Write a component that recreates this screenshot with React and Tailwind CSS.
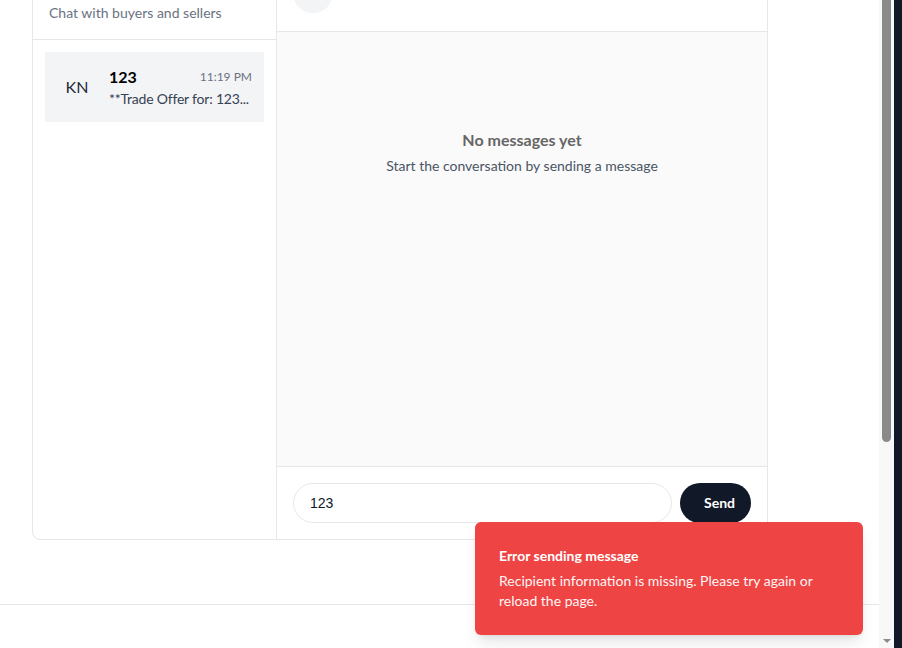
import React, { useState } from 'react';

const conversations = [
  { id: 1, initials: 'KN', name: '123', time: '11:19 PM', preview: '**Trade Offer for: 123...' },
];

const ChatList = ({ activeId }) => (
  <div className="w-[244px] shrink-0 border-r border-gray-200 flex flex-col">
    {/* title row sits above the scrolled viewport */}
    <div className="px-4 pt-12 pb-4 border-b border-gray-200">
      <p className="text-sm text-gray-500">Chat with buyers and sellers</p>
    </div>
    <div className="p-3 flex flex-col gap-2">
      {conversations.map((c) => (
        <div
          key={c.id}
          className={`flex items-center gap-2 pl-2 pr-3 py-[11px] cursor-pointer ${c.id === activeId ? 'bg-gray-100' : 'hover:bg-gray-50'}`}
        >
          <div className="w-12 h-12 rounded-full flex items-center justify-center text-base text-gray-800 shrink-0">
            {c.initials}
          </div>
          <div className="flex-1 min-w-0">
            <div className="flex items-center justify-between">
              <span className="text-base font-bold text-black leading-6">{c.name}</span>
              <span className="text-xs text-gray-500">{c.time}</span>
            </div>
            <p className="text-sm text-gray-700 whitespace-nowrap tracking-[-0.2px]">{c.preview}</p>
          </div>
        </div>
      ))}
    </div>
  </div>
);

const ChatWindow = () => {
  const [draft, setDraft] = useState('123');

  return (
    <div className="flex-1 flex flex-col min-w-0">
      <div className="px-4 py-[18px] border-b border-gray-200 flex items-center gap-3">
        <div className="w-10 h-10 rounded-full bg-gray-100 shrink-0"></div>
        <div className="h-10"></div>
      </div>
      <div className="flex-1 bg-[#fafafa] pt-[96px] flex flex-col items-center">
        <p className="text-base font-bold text-[#666666] leading-6">No messages yet</p>
        <p className="text-sm text-gray-600 mt-1">Start the conversation by sending a message</p>
      </div>
      <div className="border-t border-gray-200 p-4 flex items-center gap-2">
        <input
          value={draft}
          onChange={(e) => setDraft(e.target.value)}
          className="flex-1 h-10 rounded-full border border-gray-200 px-4 text-sm text-gray-900 outline-none font-['Liberation_Sans',sans-serif]"
        />
        <button className="h-10 w-[71px] pl-2 rounded-full bg-[#111827] text-white text-sm font-bold">
          Send
        </button>
      </div>
    </div>
  );
};

const Toast = () => (
  <div className="absolute right-4 bottom-[13px] w-[388px] rounded-md bg-[#ef4444] text-white p-6 shadow-lg">
    <p className="text-sm font-bold leading-5">Error sending message</p>
    <p className="text-sm leading-5 mt-[5px] opacity-95">
      Recipient information is missing. Please try again or reload the page.
    </p>
  </div>
);

const Scrollbar = () => (
  <div className="w-[15px] h-full bg-[#f8f8f8] flex flex-col items-center">
    <div className="w-[9px] h-[442px] bg-[#8a8a8a] rounded-b-full"></div>
    <div className="flex-1"></div>
    <div className="mb-[5px] w-0 h-0 border-l-[4px] border-r-[4px] border-t-[4px] border-l-transparent border-r-transparent border-t-[#8a8a8a]"></div>
  </div>
);

export default function App() {
  return (
    <div className="flex h-[648px] w-full overflow-hidden bg-white font-['Lato',sans-serif]">
      <div className="w-[879px] h-full relative overflow-hidden">
        <div className="mt-[-46px] ml-8 w-[736px] h-[586px] border border-gray-200 rounded-lg flex overflow-hidden bg-white">
          <ChatList activeId={1} />
          <ChatWindow />
        </div>
        <footer className="mt-[64px] border-t border-gray-200 h-[60px]"></footer>
        <Toast />
      </div>
      <Scrollbar />
      <div className="flex-1 bg-[#111827]"></div>
    </div>
  );
}
